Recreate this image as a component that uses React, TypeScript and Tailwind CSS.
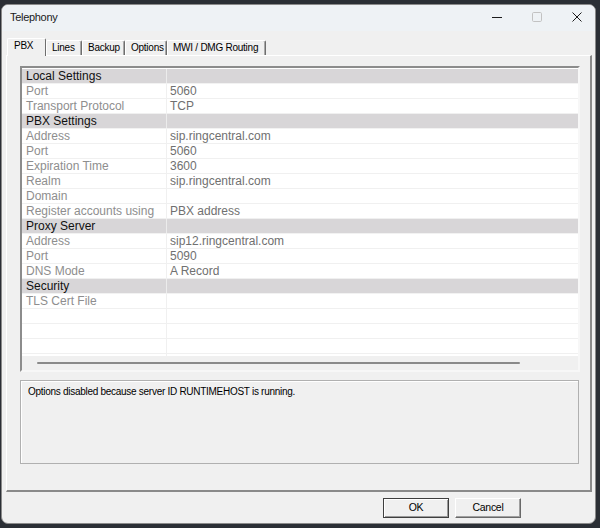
import React from "react";

type Row = { h?: boolean; l: string; v?: string };

const rows: Row[] = [
  { h: true, l: "Local Settings" },
  { l: "Port", v: "5060" },
  { l: "Transport Protocol", v: "TCP" },
  { h: true, l: "PBX Settings" },
  { l: "Address", v: "sip.ringcentral.com" },
  { l: "Port", v: "5060" },
  { l: "Expiration Time", v: "3600" },
  { l: "Realm", v: "sip.ringcentral.com" },
  { l: "Domain", v: "" },
  { l: "Register accounts using", v: "PBX address" },
  { h: true, l: "Proxy Server" },
  { l: "Address", v: "sip12.ringcentral.com" },
  { l: "Port", v: "5090" },
  { l: "DNS Mode", v: "A Record" },
  { h: true, l: "Security" },
  { l: "TLS Cert File", v: "" },
  { l: "", v: "" },
  { l: "", v: "" },
  { l: "", v: "" },
  { l: "", v: "" },
];

const tabs = [
  { label: "Lines", w: "w-[36px]" },
  { label: "Backup", w: "w-[43px]" },
  { label: "Options", w: "w-[42px]" },
  { label: "MWI / DMG Routing", w: "w-[99px]" },
];

export default function App() {
  return (
    <div className="w-[600px] h-[528px] bg-[#2b2f35] pt-[4px] pl-[1px] font-['Liberation_Sans',Arial,sans-serif]">
      <div className="w-[595px] h-[520px] bg-[#f0f0f0] rounded-[7px] border border-[#8a8a8a] flex flex-col overflow-hidden">
        {/* Title bar */}
        <div className="h-[26px] bg-[#eef2f5] flex items-center pb-[2px] shrink-0">
          <span className="pl-[8px] text-[11px] tracking-[-0.3px] text-[#1a1a1a]">Telephony</span>
          <div className="ml-auto mr-[13px] flex items-center gap-[30px]">
            <svg width="10" height="10" viewBox="0 0 10 10">
              <line x1="0" y1="5.5" x2="10" y2="5.5" stroke="#1c1c1c" strokeWidth="1" />
            </svg>
            <svg width="10" height="10" viewBox="0 0 10 10">
              <rect x="0.5" y="0.5" width="9" height="9" rx="1.2" fill="none" stroke="#c2c2c2" strokeWidth="1" />
            </svg>
            <svg width="10" height="10" viewBox="0 0 10 10">
              <line x1="0.5" y1="0.5" x2="9.5" y2="9.5" stroke="#1c1c1c" strokeWidth="1" />
              <line x1="9.5" y1="0.5" x2="0.5" y2="9.5" stroke="#1c1c1c" strokeWidth="1" />
            </svg>
          </div>
        </div>

        {/* Body */}
        <div className="pt-[7px] pl-[4px] pr-[3px] flex flex-col">
          {/* Tab strip */}
          <div className="h-[17px] flex items-end pl-[1px] relative z-10 text-[10px] tracking-[-0.25px] leading-[12px] text-black">
            <div className="w-[39px] h-[18px] -mb-[1px] bg-[#f0f0f0] border-t border-l border-white border-r border-r-[#6e6e6e] rounded-t-[2px] pl-[6px] pt-[1px]">
              PBX
            </div>
            {tabs.map((t) => (
              <div
                key={t.label}
                className={`${t.w} h-[15px] bg-[#f0f0f0] border-t border-l border-white border-r border-r-[#6e6e6e] shadow-[inset_-1px_0_0_#a8a8a8] rounded-t-[2px] pl-[5px] pt-[1px] whitespace-nowrap`}
              >
                {t.label}
              </div>
            ))}
          </div>

          {/* Panel */}
          <div className="w-[586px] h-[437px] border-t border-l border-white border-r-2 border-b-2 border-r-[#8a8a8a] border-b-[#8a8a8a] pl-[13px] pt-[10px] flex flex-col">
            {/* Grid */}
            <div className="w-[560px] h-[306px] border-2 border-t-[#8c8c8c] border-l-[#8c8c8c] border-r-[#f7f7f7] border-b-[#f7f7f7] flex flex-col">
              <div className="h-[288px] bg-white pt-[1px] overflow-hidden">
                {rows.map((r, i) =>
                  r.h ? (
                    <div key={i} className="h-[15px] flex bg-[#d8d6d8] border-b border-[#f2f2f2] text-[12px] leading-[13px] text-[#111]">
                      <div className="w-[145px] pl-[4px] pt-[1px] border-r border-[#ececec] whitespace-nowrap">{r.l}</div>
                      <div className="flex-1" />
                    </div>
                  ) : (
                    <div key={i} className="h-[15px] flex border-b border-[#f0f0f0] text-[12px] leading-[13px]">
                      <div className="w-[145px] pl-[4px] pt-[1px] border-r border-[#f0f0f0] text-[#8e8e8e] whitespace-nowrap">{r.l}</div>
                      <div className="flex-1 pl-[3px] pt-[1px] text-[#707070] whitespace-nowrap">{r.v}</div>
                    </div>
                  )
                )}
              </div>
              <div className="h-[14px] bg-[#f0f0f0] pt-[6px] pl-[15px]">
                <div className="w-[483px] h-[2px] bg-[#8a8a8a] rounded-full" />
              </div>
            </div>

            {/* Message box */}
            <div className="mt-[8px] w-[559px] h-[84px] border border-[#b0b0b0] shadow-[inset_1px_1px_0_#ffffff] pl-[7px] pt-[5px] text-[10px] tracking-[-0.28px] leading-[12px] text-black">
              Options disabled because server ID RUNTIMEHOST is running.
            </div>
          </div>

          {/* Buttons */}
          <div className="mt-[6px] flex justify-end gap-[6px] mr-[71px] text-[10.5px] tracking-[-0.3px] text-black">
            <button className="w-[66px] h-[20px] bg-[#f0f0f0] border border-[#3f3f3f] shadow-[inset_1px_1px_0_#ffffff,inset_-1px_-1px_0_#9a9a9a] flex items-center justify-center">
              OK
            </button>
            <button className="w-[66px] h-[20px] bg-[#f0f0f0] border border-t-white border-l-white border-r-[#696969] border-b-[#696969] shadow-[inset_-1px_-1px_0_#a0a0a0] flex items-center justify-center">
              Cancel
            </button>
          </div>
        </div>
      </div>
    </div>
  );
}
